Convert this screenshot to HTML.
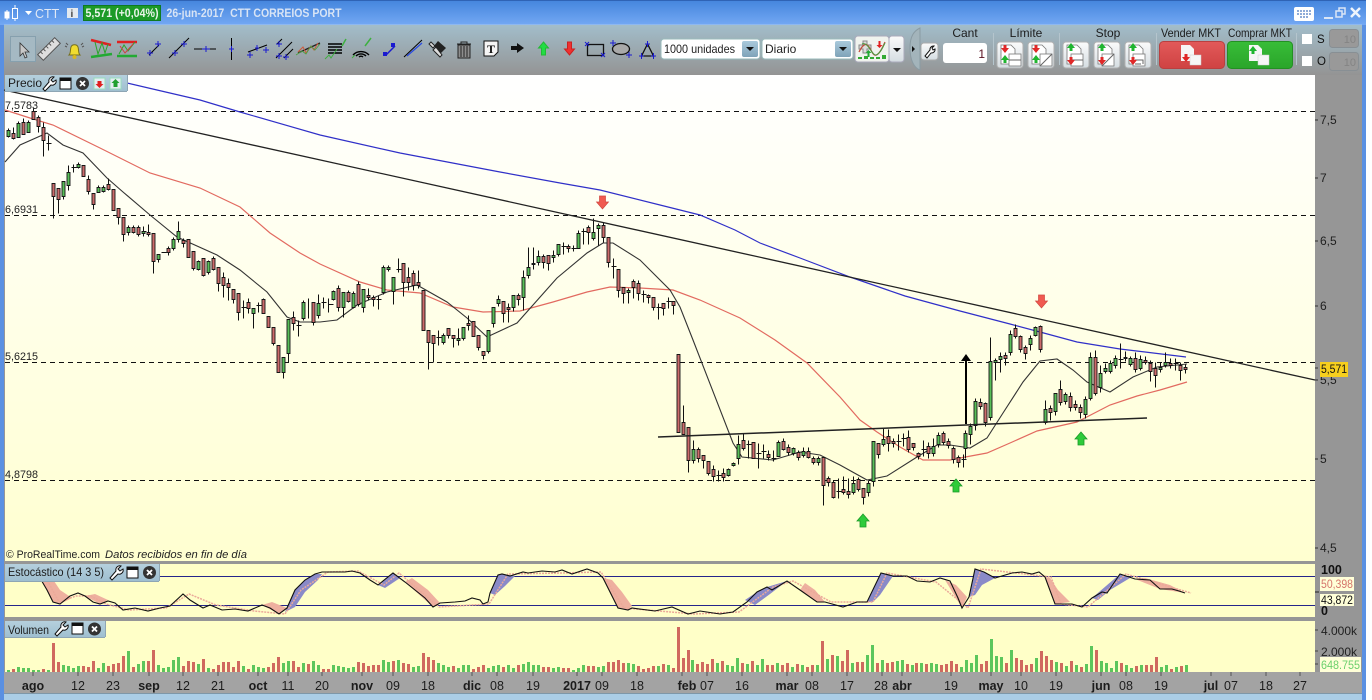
<!DOCTYPE html>
<html><head><meta charset="utf-8"><title>CTT</title>
<style>html,body{margin:0;padding:0;background:#fff;overflow:hidden}svg{display:block}text{font-family:"Liberation Sans",sans-serif}</style></head>
<body>
<svg xmlns="http://www.w3.org/2000/svg" width="1372" height="700" viewBox="0 0 1372 700">
<defs>
<linearGradient id="tb" x1="0" y1="0" x2="0" y2="1"><stop offset="0" stop-color="#4485dd"/><stop offset="1" stop-color="#73a8f3"/></linearGradient>
<linearGradient id="tl" x1="0" y1="0" x2="0" y2="1"><stop offset="0" stop-color="#a2bdca"/><stop offset="1" stop-color="#949494"/></linearGradient>
<linearGradient id="ch" x1="0" y1="0" x2="0" y2="1"><stop offset="0" stop-color="#ffffff"/><stop offset="1" stop-color="#ffffd0"/></linearGradient>
<linearGradient id="hd" x1="0" y1="0" x2="0" y2="1"><stop offset="0" stop-color="#b5d0dd"/><stop offset="1" stop-color="#9fbfd0"/></linearGradient>
<linearGradient id="bt" x1="0" y1="0" x2="0" y2="1"><stop offset="0" stop-color="#fbfbfb"/><stop offset="1" stop-color="#d5dde2"/></linearGradient>
<linearGradient id="rd" x1="0" y1="0" x2="0" y2="1"><stop offset="0" stop-color="#e25a5a"/><stop offset="1" stop-color="#cf4242"/></linearGradient>
<linearGradient id="gn" x1="0" y1="0" x2="0" y2="1"><stop offset="0" stop-color="#38bd38"/><stop offset="1" stop-color="#2aa52a"/></linearGradient>
<linearGradient id="dd" x1="0" y1="0" x2="0" y2="1"><stop offset="0" stop-color="#a9c9dc"/><stop offset="1" stop-color="#7fa3b8"/></linearGradient>
</defs>

<rect width="1366" height="700" fill="#5a90e2"/>
<rect width="1366" height="25" fill="url(#tb)"/>
<rect y="0" width="1366" height="1" fill="#2f63b5"/>
<rect x="4" y="24.500" width="1358" height="1" fill="#a8c8ee"/>
<rect x="4" y="25" width="1358" height="50" fill="url(#tl)"/>
<rect x="4" y="75" width="1358" height="619" fill="#969696"/>
<rect x="5" y="75" width="1310" height="486" fill="url(#ch)"/>
<rect x="5" y="564" width="1310" height="53" fill="#ffffc8"/>
<rect x="5" y="621" width="1310" height="51" fill="#ffffc8"/>
<rect x="4" y="672" width="1358" height="21" fill="#a3a3a3"/>
<rect x="4" y="693" width="1358" height="1" fill="#7e97a8"/>
<rect x="4" y="694" width="1358" height="6" fill="#aacde6"/>

<!-- title bar -->
<g fill="#fff" stroke="#fff"><rect x="5" y="12" width="4" height="6"/><path d="M7 10v10" fill="none"/><rect x="12.500" y="8.500" width="5" height="10" fill="none"/><path d="M15 5v3M15 19v2" fill="none"/></g>
<path d="M25 11h7l-3.500 4z" fill="#fff"/>
<text x="35" y="18" font-size="12.500" fill="#e0e8f5">CTT</text>
<rect x="67" y="8" width="11" height="10" fill="#e3e9ef"/><text x="70.500" y="17" font-size="10" font-weight="bold" fill="#444">i</text>
<rect x="83.500" y="5.500" width="77" height="15" fill="#1c9a28" stroke="#0e7a22"/>
<text x="85.500" y="17" font-size="12" font-weight="bold" fill="#eaf5ea" textLength="73" lengthAdjust="spacingAndGlyphs">5,571 (+0,04%)</text>
<text x="166.500" y="17" font-size="11.500" font-weight="bold" fill="#d8e4f5" textLength="175" lengthAdjust="spacingAndGlyphs" xml:space="preserve">26-jun-2017  CTT CORREIOS PORT</text>
<rect x="1294" y="7" width="20" height="14" rx="2" fill="#fff"/><path d="M1297 11h14M1297 14h14M1300 17h8" stroke="#6a90cc" stroke-width="1.500" stroke-dasharray="2 1"/>
<path d="M1324 18h9" stroke="#dbe6f6" stroke-width="2"/>
<path d="M1336 11h6v6h-6zM1339 11v-3h6v6h-3" fill="none" stroke="#dbe6f6" stroke-width="1.500"/>
<path d="M1351 8l9 9M1360 8l-9 9" stroke="#eef4fc" stroke-width="2.500"/>

<!-- toolbar left -->
<rect x="10.500" y="36.500" width="25" height="25" fill="#a5b9c3" stroke="#86a0ae"/>
<path d="M20 43v13l3-3 2 5 2-1-2-5h4z" fill="#c8c8c8" stroke="#333" stroke-width=".8"/>
<g transform="translate(49 49) rotate(-45)"><rect x="-12" y="-4" width="24" height="8" fill="#dedede" stroke="#555"/><path d="M-8-4v3M-4-4v3M0-4v3M4-4v3M8-4v3" stroke="#555"/></g>
<path d="M69 55c2-2 1-5 2-8 1-3 6-3 7 0 1 3 0 6 2 8z" fill="#f0dc30" stroke="#77701c"/><circle cx="74.500" cy="57" r="2" fill="#d8b820"/><path d="M65 46l2 1M66 43l2 2M84 46l-2 1M83 43l-2 2" stroke="#555"/>
<path d="M91 40l20 5" stroke-width="2.500" fill="none" stroke="#e02020"/><path d="M91 57l21-3" stroke="#22aa33" stroke-width="2.500"/><path d="M95 42l3 12 4-11 3 10 3-9" fill="none" stroke="#2aa52a"/>
<path d="M117 42h20" stroke="#e02020" stroke-width="2.500"/><path d="M117 56h20" stroke="#22aa33" stroke-width="2.500"/><path d="M119 54l5-9 4 6 7-9" fill="none" stroke="#2aa52a"/><path d="M120 46l5 7 8-9" fill="none" stroke="#d04040"/>
<g fill="none" stroke="#000"><path d="M149 55l10-10"/><path d="M169 58l20-20"/><path d="M194 49h22"/><path d="M231.500 38v22"/><path d="M248 52l19-7"/><path d="M276 58l16-16M284 58l9-9M277 44l5-5"/><path d="M298 53l22-10" stroke="#222" stroke-width="1.300"/><path d="M328 44h14M328 47h14M328 50h14M328 53h14" stroke-width="1.500"/><path d="M353 55a11 11 0 0 1 16 0M356 56a7 7 0 0 1 10 0M359 57a3 3 0 0 1 4 0" stroke-width="1.400"/><path d="M404 57l18-17"/></g>
<g stroke="#1a1ad0" fill="none"><path d="M147 53h6M150 50v6M155 44h6M158 41v6M172 53h6M175 50v6M181 44h6M184 41v6M202 49h8M206 46v6M229 49h5M231.500 46v6M247 55h6M250 52v6M263 50h6M266 47v6M255 48h4M257 45v6M276 56h6M279 53v6M283 57h6M286 54v6M276 44h6M279 41v6"/><path d="M407 56l15-13" stroke="#2a4ae0" stroke-width="1.300"/><path d="M386 55l9-9" stroke-width="1.500"/></g>
<rect x="383" y="52" width="4" height="4" fill="#1a1ad0"/><rect x="391" y="43" width="4" height="4" fill="#1a1ad0"/>
<path d="M298 52l5-5 3 6 5-7 3 4 4-7" fill="none" stroke="#cc5a3a"/><path d="M296 55l6-4 4 3 5-8 4 4 5-6" fill="none" stroke="#4aa040" stroke-width=".8"/>
<path d="M325 59l4-4 2 3 6-9M352 58l3-3" fill="none" stroke="#3eb040"/><path d="M342 46l4-7M365 46l6-8" stroke="#3eb040" fill="none" stroke-width="1.500"/>
<path d="M431 42l4 4-2 2-4-4zM436 47l6 8-2 2-7-7z" fill="#ddd" stroke="#222"/><path d="M438 41l8 7-5 5-7-7z" fill="#222"/>
<rect x="458" y="45" width="12" height="13" fill="#8e8e8e" stroke="#222"/><path d="M457 44h14M461 46v11M464 46v11M467 46v11M461 44v-2h6v2" fill="none" stroke="#222"/>
<path d="M484 41h14v11l-4 4h-10z" fill="#f5f5f5" stroke="#111"/><text x="487" y="53" font-size="12" font-weight="bold" fill="#111" style="font-family:'Liberation Serif',serif">T</text>
<path d="M511 46h6v-3l7 5-7 5v-3h-6z" fill="#111"/>
<path d="M543.500 42l5 6h-3v7h-4v-7h-3z" fill="#22dd44" stroke="#22bb33"/>
<path d="M569.500 55l5-6h-3v-7h-4v7h-3z" fill="#f03030" stroke="#cc2020"/>
<rect x="587.500" y="44.500" width="16" height="11" fill="none" stroke="#111" stroke-width="1.300"/><path d="M585 42l4 4M589 42l-4 4M601 53l4 4M605 53l-4 4" stroke="#1a1ad0"/>
<ellipse cx="621" cy="49" rx="8.500" ry="5.500" fill="#a9a9a9" stroke="#111" stroke-width="1.300"/><path d="M610 43h6M613 40v6M626 55h6M629 52v6" stroke="#1a1ad0"/>
<path d="M647.500 44l-6 12h12z" fill="none" stroke="#111" stroke-width="1.300"/><path d="M645 44h5M647.500 41v6M639 56h5M641.500 53v6M651 56h5M653.500 53v6" stroke="#1a1ad0"/>

<rect x="661" y="39" width="99" height="20" rx="3" fill="#fff" stroke="#9bb"/><text x="664" y="53" font-size="12" fill="#222" textLength="71" lengthAdjust="spacingAndGlyphs">1000 unidades</text>
<rect x="742" y="41" width="16" height="16" rx="2" fill="url(#dd)"/><path d="M746 47h8l-4 4z" fill="#111"/>
<rect x="762" y="39" width="91" height="20" rx="3" fill="#fff" stroke="#9bb"/><text x="765" y="53" font-size="12" fill="#222">Diario</text>
<rect x="835" y="41" width="16" height="16" rx="2" fill="url(#dd)"/><path d="M839 47h8l-4 4z" fill="#111"/>
<rect x="855" y="36" width="34" height="26" rx="3" fill="#f0f3ee" stroke="#aab"/><rect x="889" y="36" width="15" height="26" rx="3" fill="url(#bt)" stroke="#aab"/><path d="M893 48h8l-4 4z" fill="#111"/>
<path d="M859 45h4v-4h4v4h4v4h-4v4h-4v-4h-4z" fill="#ddd" stroke="#888"/><path d="M859 52c6-12 9-8 13 0 3 6 7 4 13-10" fill="none" stroke="#c05040" stroke-width="1.300"/><path d="M862 44c6-3 10 12 14 11s7-8 9-12" fill="none" stroke="#4a9a40"/><path d="M868.500 50l3 3h-2v4h-2v-4h-2z" fill="#22aa33"/><path d="M879.500 48l3-3h-2v-4h-2v4h-2z" fill="#e02020"/><path d="M858 59v-2h4v2zM864 59v-3h4v3zM870 59v-2h4v2zM876 59v-2h4v2zM882 59v-4h4v4z" fill="#33aa33"/>
<path d="M920 28c-6 3-10 8-10 20 0 12 4 20 10 22z" fill="#a3b4bb" stroke="#8a9ba3"/><path d="M912 46v6l3-3z" fill="#111"/>

<!-- toolbar right -->
<rect x="921" y="43" width="17" height="17" rx="3" fill="url(#bt)" stroke="#aaa"/><path d="M925 56l5-6a3.500 3.500 0 0 1 4-4l-2 2 1 2 2-1a3.500 3.500 0 0 1-4 4l-4 5z" fill="#fff" stroke="#111"/>
<rect x="943" y="43" width="44" height="20" rx="3" fill="#fff"/><text x="985" y="58" font-size="12" fill="#5a1020" text-anchor="end">1</text>
<text x="965" y="37" font-size="12" fill="#1c1c1c" text-anchor="middle">Cant</text>
<text x="1026" y="37" font-size="12" fill="#1c1c1c" text-anchor="middle">Límite</text>
<text x="1108" y="37" font-size="12" fill="#1c1c1c" text-anchor="middle">Stop</text>
<text x="1191" y="37" font-size="12" fill="#1c1c1c" text-anchor="middle" textLength="60" lengthAdjust="spacingAndGlyphs">Vender MKT</text>
<text x="1260" y="37" font-size="12" fill="#1c1c1c" text-anchor="middle" textLength="64" lengthAdjust="spacingAndGlyphs">Comprar MKT</text>
<path d="M993.500 33v32M1059.500 33v32M1156.500 33v32M1296.500 33v32" stroke="#b5c5cd"/>
<g fill="url(#bt)" stroke="#b0b0b0"><rect x="997" y="42" width="26" height="26" rx="3"/><rect x="1028" y="42" width="26" height="26" rx="3"/><rect x="1063" y="42" width="26" height="26" rx="3"/><rect x="1094" y="42" width="26" height="26" rx="3"/><rect x="1125" y="42" width="26" height="26" rx="3"/></g>
<g fill="#fff" stroke="#777" stroke-width=".8"><path d="M1001 45h10l4 4v15h-14zM1032 45h10l4 4v15h-14zM1067 45h10l4 4v15h-14zM1098 45h10l4 4v15h-14zM1129 45h10l4 4v15h-14z"/><rect x="1009" y="54" width="12" height="12"/><rect x="1040" y="54" width="12" height="12"/><rect x="1071" y="54" width="12" height="12"/><rect x="1102" y="54" width="12" height="12"/><rect x="1133" y="54" width="12" height="12"/></g>
<path d="M1009 60h12M1071 60h12M1040 66l12-12M1102 66l12-12M1135 60h8v4M1135 64h6" stroke="#666" fill="none"/>
<g fill="#e02828"><path d="M1005 53l-4-5h2.500v-3h3v3h2.500zM1036 53l-4-5h2.500v-3h3v3h2.500zM1071 65l-4-5h2.500v-3h3v3h2.500zM1102 65l-4-5h2.500v-3h3v3h2.500zM1133 65l-4-5h2.500v-3h3v3h2.500z"/></g>
<g fill="#1fb52f"><path d="M1005 55l-4 5h2.500v3h3v-3h2.500zM1036 55l-4 5h2.500v3h3v-3h2.500zM1071 43l-4 5h2.500v3h3v-3h2.500zM1102 43l-4 5h2.500v3h3v-3h2.500zM1133 43l-4 5h2.500v3h3v-3h2.500z"/></g>
<rect x="1159.500" y="41.500" width="65" height="27" rx="4" fill="url(#rd)" stroke="#b94040"/>
<rect x="1227.500" y="41.500" width="65" height="27" rx="4" fill="url(#gn)" stroke="#239023"/>
<path d="M1181 45h9l4 4v12h-13zM1249 45h9l4 4v12h-13z" fill="#f6f6f6"/><rect x="1190" y="55" width="11" height="10" fill="#f6f6f6" stroke="#ccc" stroke-width=".5"/><rect x="1258" y="55" width="11" height="10" fill="#f6f6f6" stroke="#ccc" stroke-width=".5"/>
<path d="M1186 62l-4-5h2.500v-3h3v3h2.500z" fill="#e02828"/><path d="M1253 46l-4 5h2.500v3h3v-3h2.500z" fill="#1fb52f"/>
<rect x="1302" y="34" width="10" height="10" fill="#fff"/><rect x="1302" y="56" width="10" height="10" fill="#fff"/>
<text x="1317" y="43" font-size="11.500" fill="#111">S</text><text x="1317" y="65" font-size="11.500" fill="#111">O</text>
<rect x="1329.500" y="29.500" width="29" height="18" rx="3" fill="#999" stroke="#888f94"/><rect x="1329.500" y="52.500" width="29" height="18" rx="3" fill="#999" stroke="#888f94"/>
<text x="1356" y="43" font-size="11" fill="#848484" text-anchor="end">10</text><text x="1356" y="66" font-size="11" fill="#848484" text-anchor="end">10</text>

<!-- price chart -->
<path d="M5 111.500H1315M5 215.500H1315M5 362.500H1315M5 480.500H1315" stroke="#111" stroke-dasharray="5 4" fill="none"/>
<path d="M127 83L157 90 200 100 240 112 320 135 400 153 500 172 560 183 600 190 660 205 700 215 735 230 760 243 800 258 850 277 905 296 960 311 1010 324 1040 332 1077 342 1120 349 1186 357" fill="none" stroke="#3030c8" stroke-width="1.200"/>
<path d="M5 110L30 118 53 125 100 148 150 173 200 188 240 207 270 233 300 253 320 264 360 282 387 290 420 293 453 307 483 312 520 311 553 302 587 292 610 287 640 288 673 290 700 300 740 318 775 340 807 363 840 397 860 420 877 432 900 447 923 460 950 460 960 458 987 453 1010 443 1037 431 1077 422 1110 405 1137 396 1160 390 1187 382" fill="none" stroke="#e26a60" stroke-width="1.200"/>
<path d="M5 162L20 145 47 133 63 145 83 153 107 178 123 192 150 215 177 237 217 255 240 270 267 292 287 317 300 322 320 322 337 320 357 305 387 292 417 285 447 302 467 318 487 337 517 323 557 278 587 253 603 243 613 243 640 260 670 290 680 307 693 340 733 443 742 457 773 460 800 452 820 455 840 465 867 480 887 476 917 457 937 445 950 445 970 448 987 438 1003 413 1023 382 1040 361 1057 359 1073 370 1087 382 1110 392 1133 377 1157 367 1187 364" fill="none" stroke="#333" stroke-width="1.100"/>

<!-- wicks -->
<path transform="translate(.5 .5)" fill="none" stroke="#111" d="M8 128V137M13 127V139M18 121V137M23 118V134M28 120V132M33 108V119M38 115V132M43 122V156M46 143H51M48 135V150M53 183V218M58 188V213M63 181V199M68 165V190M71 167H76M73 164V172M78 162V168M83 165V176M88 175V194M93 193V209M98 185V192M103 185V192M108 178V190M113 189V210M118 208V224M123 217V241M128 225V235M133 225V233M138 225V236M141 231H146M143 226V236M148 224V236M153 233V273M158 254V262M161 252H166M168 246V255M173 237V250M178 221V242M183 238V247M188 239V257M193 251V270M198 260V270M203 258V276M208 260V274M213 256V270M218 267V291M223 272V297M228 278V300M233 289V303M238 293V320M241 307H246M243 300V318M248 298V313M253 308V328M256 305H261M258 302V312M263 298V313M268 316V327M273 327V345M278 345V372M283 357V378M288 319V362M293 311V330M296 325H301M298 320V336M303 300V320M308 298V318M313 302V325M318 294V318M321 302H326M323 297V308M328 304H333M328 298V312M333 290V300M338 285V311M343 292V317M348 290V302M353 291V308M358 281V306M363 289V312M368 288V300M373 295V306M376 299H381M378 295V309M383 265V294M388 265V271M393 277V304M396 269H401M398 258V272M403 263V296M408 267V290M413 270V290M418 270V288M423 290V330M428 330V369M433 335V362M436 337H441M438 330V345M443 333V344M448 328V338M453 335V347M458 328V345M463 327V340M468 315V330M473 321V336M478 335V350M483 351V359M488 338V353M493 307V327M498 295V306M503 301V322M508 303V322M513 295V311M518 293V305M523 270V310M528 247V278M533 247V269M538 250V265M543 254V268M548 255V270M553 250V262M558 244V256M561 246H566M563 242V254M568 244V252M571 248H576M573 245V251M578 230V248M581 231H586M583 228V244M588 225V244M593 218V240M598 223V245M603 222V242M608 237V267M611 266H616M613 258V278M618 269V297M623 287V303M628 288V303M633 279V298M638 280V300M641 294H646M643 290V302M648 294V303M653 297V310M656 307H661M658 303V319M663 303V315M666 301H671M668 297V308M673 301V314M678 354V432M683 405V434M688 427V472M693 440V463M698 447V462M703 455V468M708 461V475M713 465V481M716 475H721M718 470V481M723 468V481M728 468V476M733 462V466M738 435V464M743 433V450M746 444H751M748 440V458M753 442V458M756 453H761M758 443V468M761 451H766M763 444V458M768 450V460M771 458H776M773 450V461M778 440V456M783 438V450M788 444V455M793 447V455M798 450V460M803 447V457M808 447V458M813 456V464M818 456V465M823 457V505M828 476V486M833 480V498M836 491H841M838 478V498M843 476V494M848 478V498M853 476V494M858 477V491M863 488V504M868 480V496M873 441V486M878 443V458M883 428V446M888 429V451M893 438V447M896 441H901M898 434V450M901 438H906M903 433V446M908 430V452M913 443V450M918 452V459M921 449H926M923 440V456M928 442V458M933 438V456M938 432V447M943 431V444M948 438V448M953 446V463M958 455V467M961 459H966M963 454V467M965 430V458M970 423V444M975 398V430M980 398V409M985 402V426M990 337V420M995 358V380M1000 352V372M1005 352V365M1010 330V355M1015 324V338M1020 335V352M1025 345V359M1030 335V350M1035 326V336M1040 325V352M1045 400V424M1050 405V420M1055 393V415M1060 380V405M1065 392V404M1070 392V411M1075 400V410M1080 404V418M1085 396V418M1090 352V400M1095 350V395M1100 365V392M1105 363V373M1110 360V373M1115 355V368M1118 359H1123M1120 343V368M1125 351V361M1130 356V366M1135 352V372M1140 355V370M1145 356V364M1150 360V381M1155 362V387M1160 362V372M1165 352V367M1170 358V368M1173 363H1178M1175 358V370M1180 362V380M1185 364V373"/>
<!-- green bodies -->
<path transform="translate(0 .5)" fill="#58bf58" stroke="#161616" stroke-width=".9" d="M7 130h3V136h-3zM17 123h3V137h-3zM27 122h3V132h-3zM62 181h3V196h-3zM67 172h3V185h-3zM77 164h3V167h-3zM97 187h3V192h-3zM102 187h3V191h-3zM127 227h3V232h-3zM142 231h3V233h-3zM157 254h3V259h-3zM172 239h3V248h-3zM177 231h3V239h-3zM197 261h3V269h-3zM207 261h3V272h-3zM252 308h3V313h-3zM282 357h3V372h-3zM287 319h3V353h-3zM302 302h3V318h-3zM317 303h3V315h-3zM332 291h3V299h-3zM342 292h3V307h-3zM352 293h3V307h-3zM362 289h3V307h-3zM382 267h3V292h-3zM387 267h3V269h-3zM392 277h3V291h-3zM442 335h3V342h-3zM457 338h3V340h-3zM462 327h3V338h-3zM487 330h3V351h-3zM492 307h3V323h-3zM497 299h3V303h-3zM512 295h3V307h-3zM522 277h3V297h-3zM527 267h3V275h-3zM532 263h3V264h-3zM537 256h3V262h-3zM552 255h3V257h-3zM557 244h3V254h-3zM577 233h3V248h-3zM592 232h3V238h-3zM597 225h3V228h-3zM627 290h3V292h-3zM692 449h3V460h-3zM727 469h3V475h-3zM732 463h3V465h-3zM737 444h3V458h-3zM777 442h3V456h-3zM792 448h3V453h-3zM802 451h3V455h-3zM817 458h3V462h-3zM852 483h3V492h-3zM867 483h3V492h-3zM872 441h3V481h-3zM882 439h3V444h-3zM932 446h3V453h-3zM937 435h3V444h-3zM964 433h3V448h-3zM969 426h3V434h-3zM974 401h3V425h-3zM989 361h3V417h-3zM994 360h3V362h-3zM999 356h3V359h-3zM1009 334h3V352h-3zM1029 338h3V344h-3zM1034 327h3V335h-3zM1044 409h3V422h-3zM1054 393h3V411h-3zM1064 394h3V401h-3zM1084 399h3V414h-3zM1089 357h3V398h-3zM1099 373h3V387h-3zM1104 368h3V371h-3zM1109 363h3V371h-3zM1114 358h3V365h-3zM1129 358h3V364h-3zM1139 359h3V368h-3zM1159 367h3V369h-3zM1164 362h3V365h-3z"/>
<!-- red bodies -->
<path transform="translate(0 .5)" fill="#cc6b6b" stroke="#161616" stroke-width=".9" d="M12 133h3V138h-3zM22 122h3V134h-3zM32 111h3V119h-3zM37 117h3V126h-3zM42 127h3V140h-3zM52 183h3V196h-3zM57 188h3V199h-3zM82 165h3V176h-3zM87 179h3V191h-3zM92 193h3V204h-3zM107 184h3V189h-3zM112 189h3V210h-3zM117 208h3V217h-3zM122 217h3V234h-3zM132 227h3V232h-3zM137 227h3V234h-3zM147 232h3V234h-3zM152 233h3V261h-3zM167 248h3V252h-3zM182 240h3V243h-3zM187 239h3V257h-3zM192 251h3V268h-3zM202 258h3V275h-3zM212 258h3V269h-3zM217 267h3V283h-3zM222 277h3V285h-3zM227 283h3V287h-3zM232 289h3V299h-3zM237 293h3V312h-3zM247 302h3V308h-3zM262 299h3V313h-3zM267 316h3V327h-3zM272 327h3V343h-3zM277 345h3V372h-3zM292 317h3V323h-3zM312 302h3V322h-3zM337 288h3V307h-3zM347 292h3V301h-3zM357 284h3V304h-3zM367 295h3V297h-3zM372 297h3V299h-3zM402 263h3V282h-3zM407 277h3V282h-3zM412 273h3V285h-3zM417 282h3V285h-3zM422 290h3V330h-3zM427 330h3V342h-3zM432 335h3V343h-3zM447 328h3V335h-3zM452 335h3V338h-3zM467 323h3V325h-3zM472 321h3V336h-3zM477 335h3V347h-3zM482 351h3V355h-3zM502 301h3V313h-3zM507 307h3V309h-3zM517 295h3V299h-3zM542 256h3V262h-3zM547 255h3V263h-3zM567 246h3V248h-3zM587 227h3V232h-3zM602 225h3V237h-3zM607 237h3V262h-3zM617 269h3V290h-3zM622 287h3V293h-3zM632 281h3V287h-3zM637 283h3V293h-3zM647 295h3V297h-3zM652 297h3V307h-3zM662 303h3V308h-3zM672 301h3V305h-3zM677 354h3V432h-3zM682 422h3V434h-3zM687 427h3V460h-3zM697 449h3V458h-3zM702 455h3V460h-3zM707 461h3V473h-3zM712 469h3V476h-3zM722 473h3V477h-3zM742 440h3V448h-3zM752 442h3V458h-3zM767 454h3V457h-3zM782 441h3V449h-3zM787 447h3V452h-3zM797 452h3V457h-3zM807 451h3V457h-3zM812 458h3V462h-3zM822 457h3V485h-3zM827 478h3V482h-3zM832 482h3V497h-3zM842 489h3V492h-3zM847 491h3V494h-3zM857 479h3V489h-3zM862 488h3V497h-3zM877 443h3V454h-3zM887 436h3V443h-3zM892 441h3V443h-3zM907 437h3V449h-3zM912 443h3V447h-3zM917 453h3V456h-3zM927 446h3V453h-3zM942 433h3V442h-3zM947 441h3V445h-3zM952 448h3V459h-3zM957 457h3V462h-3zM979 402h3V406h-3zM984 403h3V422h-3zM1004 355h3V358h-3zM1014 328h3V336h-3zM1019 336h3V349h-3zM1024 347h3V353h-3zM1039 326h3V349h-3zM1049 408h3V412h-3zM1059 389h3V402h-3zM1069 396h3V407h-3zM1074 404h3V407h-3zM1079 407h3V412h-3zM1094 357h3V393h-3zM1124 357h3V358h-3zM1134 358h3V369h-3zM1144 360h3V362h-3zM1149 363h3V371h-3zM1154 368h3V375h-3zM1169 363h3V365h-3zM1179 365h3V370h-3zM1184 367h3V369h-3z"/>

<path d="M4 90L1315 380" stroke="#222" stroke-width="1.300" fill="none"/>
<path d="M658 437L1147 418" stroke="#222" stroke-width="1.500" fill="none"/>
<path d="M966 424V360" stroke="#000" stroke-width="2"/><path d="M961 361l5-7 5 7z" fill="#000"/>
<path d="M599.500 196h6v6h3l-6 7-6-7h3z" fill="#f05a50" stroke="#d04840" stroke-width=".7"/>
<path d="M1038.500 295h6v6h3l-6 7-6-7h3z" fill="#f05a50" stroke="#d04840" stroke-width=".7"/>
<path d="M860 527v-6h-3l6-7 6 7h-3v6z" fill="#2ecb3a" stroke="#1b9a28" stroke-width=".8"/>
<path d="M953 492v-6h-3l6-7 6 7h-3v6z" fill="#2ecb3a" stroke="#1b9a28" stroke-width=".8"/>
<path d="M1078 445v-6h-3l6-7 6 7h-3v6z" fill="#2ecb3a" stroke="#1b9a28" stroke-width=".8"/>

<text x="5" y="109" font-size="11" fill="#222" textLength="33" lengthAdjust="spacingAndGlyphs">7,5783</text>
<text x="5" y="213" font-size="11" fill="#222" textLength="33" lengthAdjust="spacingAndGlyphs">6,6931</text>
<text x="5" y="360" font-size="11" fill="#222" textLength="33" lengthAdjust="spacingAndGlyphs">5,6215</text>
<text x="5" y="478" font-size="11" fill="#222" textLength="33" lengthAdjust="spacingAndGlyphs">4,8798</text>
<text x="6" y="558" font-size="11" fill="#222" textLength="94" lengthAdjust="spacingAndGlyphs">© ProRealTime.com</text>
<text x="105" y="558" font-size="11" font-style="italic" fill="#222" textLength="142" lengthAdjust="spacingAndGlyphs">Datos recibidos en fin de día</text>

<!-- right axis -->
<g font-size="12" fill="#1f1f1f"><text x="1320" y="124">7,5</text><text x="1320" y="182">7</text><text x="1320" y="245">6,5</text><text x="1320" y="310">6</text><text x="1320" y="384">5,5</text><text x="1320" y="463">5</text><text x="1320" y="552">4,5</text></g>
<path d="M1315 120h3M1315 178h3M1315 241h3M1315 306h3M1315 380h3M1315 459h3M1315 548h3M1315 368h3" stroke="#333"/>
<rect x="1320" y="362" width="28" height="15" fill="#f7cf1e"/><text x="1321" y="373" font-size="12" fill="#111" textLength="26" lengthAdjust="spacingAndGlyphs">5,571</text>

<!-- panel header price -->
<rect x="5" y="75" width="122" height="16" fill="url(#hd)"/><path d="M127.500 75v16M5 91.500h122" stroke="#8ea6b4"/>
<text x="8" y="87" font-size="12" fill="#1c1c1c">Precio</text>
<path d="M43 89l6-7a4 4 0 0 1 5-5l-3 3 2 2 3-2a4 4 0 0 1-5 5l-6 6z" fill="#fff" stroke="#111"/>
<rect x="60" y="78" width="11" height="11" fill="#fff" stroke="#111"/><rect x="60" y="78" width="11" height="3" fill="#111"/>
<circle cx="82.500" cy="83.500" r="6.500" fill="#333"/><path d="M80 81l5 5M85 81l-5 5" stroke="#fff" stroke-width="1.800"/>
<rect x="94" y="78" width="11" height="11" fill="#e5eef3" stroke="#9db"/><path d="M99.500 88l-4-4h2v-3h4v3h2z" fill="#e02020"/>
<rect x="110" y="78" width="11" height="11" fill="#e5eef3" stroke="#9db"/><path d="M115.500 79l-4 4h2v4h4v-4h2z" fill="#20a030"/>

<!-- stochastic -->
<path d="M5 576.500H1315M5 605.500H1315" stroke="#25258a" fill="none"/>
<g fill="#8a8ac8"><path d="M285 612L295 590 305 580 315 574 322 574 318 580 305 592 295 607z"/><path d="M490 593L498 575 502 574 515 576 505 586 495 595z"/><path d="M745 600L757 592 767 587 787 581 770 594 755 605z"/><path d="M867 602L881 573 893 576 880 595 873 602z"/><path d="M969 597L975 569 984 572 995 578 982 585 975 595z"/><path d="M1092 598L1120 574 1130 578 1110 590 1098 600z"/><path d="M378 585L393 573 400 578 385 588z"/></g>
<g fill="#eeb09f"><path d="M40 578L53 602 60 604 72 598 60 590 50 575z"/><path d="M405 582L433 607 440 603 428 590 412 578z"/><path d="M603 578L618 608 628 610 632 606 622 592 612 580z"/><path d="M800 590L817 602 825 602 815 590 805 583z"/><path d="M945 580L962 608 967 597 956 585z"/><path d="M1045 577L1055 604 1070 602 1058 590 1050 578z"/><path d="M1135 579L1160 589 1185 593 1170 585 1145 578z"/><path d="M85 596L100 604 108 600 95 594z"/><path d="M262 605L279 614 287 608 272 602z"/></g>
<path transform="translate(6 0)" fill="none" stroke="#eba99a" stroke-width="1.500" stroke-dasharray="2 1" d="M40 578L53 602 70 596 85 596 100 604 123 610 160 608 183 594 210 605 248 611 279 614 295 590 322 572 352 571 378 585 393 573 433 607 483 604 502 574 555 573 595 572 618 608 688 614 733 612 767 587 787 581 825 602 867 602 881 573 930 582 962 608 975 569 1045 577 1055 604 1082 607 1120 574 1185 593"/>
<path fill="none" stroke="#111" stroke-width="1.100" d="M40 578L47 590 53 602 60 604 70 596 78 593 85 596 93 602 100 604 108 601 115 603 123 610 135 608 148 611 160 608 170 606 183 594 190 600 203 608 210 605 222 610 235 609 248 611 262 605 270 608 279 614 287 608 295 590 305 580 315 574 322 572 345 572 352 571 360 573 370 580 378 585 393 573 405 582 415 590 425 598 433 607 440 603 455 602 465 601 472 598 480 600 483 604 488 602 490 593 498 575 502 574 510 576 523 572 528 573 542 571 555 572 562 570 572 574 587 569 598 573 603 578 618 608 628 610 632 608 655 611 672 607 688 614 700 611 720 614 733 612 747 602 757 592 767 587 772 590 787 581 800 590 817 602 825 602 843 607 857 602 867 602 881 573 893 576 907 576 917 581 930 582 940 578 950 581 958 598 962 608 969 597 975 569 984 572 995 578 1012 573 1022 572 1032 574 1039 572 1045 577 1055 604 1072 604 1082 607 1092 598 1102 592 1107 593 1120 574 1135 579 1150 580 1160 589 1172 589 1179 591 1185 593"/>
<rect x="5" y="564" width="154" height="17" fill="url(#hd)"/><path d="M159.500 564v17M5 581.500h154" stroke="#8ea6b4"/>
<text x="8" y="576" font-size="12" fill="#1c1c1c" textLength="96" lengthAdjust="spacingAndGlyphs">Estocástico (14 3 5)</text>
<path d="M110 578l6-7a4 4 0 0 1 5-5l-3 3 2 2 3-2a4 4 0 0 1-5 5l-6 6z" fill="#fff" stroke="#111"/>
<rect x="127" y="567" width="11" height="11" fill="#fff" stroke="#111"/><rect x="127" y="567" width="11" height="3" fill="#111"/>
<circle cx="149.500" cy="572.500" r="6.500" fill="#333"/><path d="M147 570l5 5M152 570l-5 5" stroke="#fff" stroke-width="1.800"/>
<text x="1321" y="574" font-size="12.500" font-weight="bold" fill="#111">100</text>
<text x="1321" y="615" font-size="12.500" font-weight="bold" fill="#111">0</text>
<rect x="1320" y="577" width="34" height="14" fill="#ffffd8"/><text x="1321" y="588" font-size="12" fill="#d5756a" textLength="32" lengthAdjust="spacingAndGlyphs">50,398</text>
<rect x="1320" y="594" width="34" height="12" fill="#ffffd8"/><text x="1321" y="604" font-size="12" fill="#111" textLength="32" lengthAdjust="spacingAndGlyphs">43,872</text>
<path d="M1315 592h4" stroke="#222"/>

<!-- volume -->
<path transform="translate(.5 0)" fill="none" stroke="#5cc65c" stroke-width="3" d="M8 672v-2M18 672v-5M23 672v-4M28 672v-4M33 672v-2M38 672v-2M48 672v-2M63 672v-7M68 672v-6M73 672v-4M78 672v-6M98 672v-4M103 672v-9M128 672v-21M138 672v-8M143 672v-11M158 672v-7M163 672v-4M168 672v-5M173 672v-12M178 672v-15M198 672v-8M208 672v-4M243 672v-6M253 672v-7M258 672v-5M263 672v-4M283 672v-9M288 672v-11M303 672v-9M313 672v-11M318 672v-7M333 672v-7M338 672v-6M343 672v-5M348 672v-4M353 672v-5M383 672v-12M388 672v-10M398 672v-12M413 672v-5M418 672v-6M438 672v-9M443 672v-7M448 672v-5M458 672v-4M463 672v-7M468 672v-7M488 672v-4M493 672v-6M498 672v-7M508 672v-7M513 672v-4M523 672v-8M528 672v-10M533 672v-7M538 672v-7M553 672v-4M558 672v-5M573 672v-2M578 672v-4M583 672v-7M598 672v-5M603 672v-6M628 672v-9M633 672v-8M658 672v-6M668 672v-7M692 672v-12M717 672v-9M727 672v-7M732 672v-6M737 672v-14M747 672v-8M757 672v-7M762 672v-13M777 672v-9M792 672v-5M802 672v-7M817 672v-7M827 672v-13M837 672v-16M852 672v-9M867 672v-17M872 672v-27M882 672v-12M897 672v-11M902 672v-12M912 672v-7M921 672v-9M931 672v-9M936 672v-8M961 672v-5M966 672v-12M971 672v-9M976 672v-17M991 672v-33M996 672v-16M1001 672v-15M1011 672v-22M1036 672v-14M1056 672v-10M1066 672v-6M1076 672v-7M1086 672v-8M1091 672v-26M1101 672v-11M1106 672v-9M1111 672v-4M1116 672v-11M1126 672v-7M1131 672v-4M1141 672v-7M1161 672v-5M1166 672v-7M1176 672v-5M1186 672v-7"/>
<path transform="translate(.5 0)" fill="none" stroke="#d0695f" stroke-width="3" d="M13 672v-3M43 672v-3M53 672v-29M58 672v-10M83 672v-6M88 672v-5M93 672v-11M108 672v-6M113 672v-8M118 672v-9M123 672v-16M133 672v-5M148 672v-11M153 672v-22M183 672v-6M188 672v-11M193 672v-10M203 672v-13M213 672v-3M218 672v-7M223 672v-10M228 672v-10M233 672v-5M238 672v-11M248 672v-3M268 672v-5M273 672v-9M278 672v-15M293 672v-11M298 672v-5M308 672v-8M323 672v-3M328 672v-3M358 672v-10M363 672v-9M368 672v-6M373 672v-7M378 672v-7M393 672v-11M403 672v-9M408 672v-8M423 672v-19M428 672v-15M433 672v-12M453 672v-6M473 672v-3M478 672v-5M483 672v-7M503 672v-5M518 672v-7M543 672v-5M548 672v-5M563 672v-4M568 672v-4M588 672v-6M593 672v-6M608 672v-10M613 672v-10M618 672v-12M623 672v-9M638 672v-6M643 672v-3M648 672v-4M653 672v-6M663 672v-8M673 672v-4M678 672v-45M683 672v-14M688 672v-22M697 672v-8M702 672v-10M707 672v-8M712 672v-13M722 672v-11M742 672v-9M752 672v-11M767 672v-7M772 672v-7M782 672v-7M787 672v-9M797 672v-8M807 672v-5M812 672v-7M822 672v-31M832 672v-17M842 672v-11M847 672v-22M857 672v-10M862 672v-10M877 672v-9M887 672v-9M892 672v-10M907 672v-8M916 672v-9M926 672v-8M941 672v-7M946 672v-8M951 672v-11M956 672v-8M981 672v-8M986 672v-11M1006 672v-9M1016 672v-14M1021 672v-12M1026 672v-7M1031 672v-8M1041 672v-21M1046 672v-16M1051 672v-12M1061 672v-9M1071 672v-11M1081 672v-5M1096 672v-22M1121 672v-9M1136 672v-6M1146 672v-7M1151 672v-7M1156 672v-15M1171 672v-3M1181 672v-6"/>
<rect x="5" y="621" width="100" height="16" fill="url(#hd)"/><path d="M105.500 621v16M5 637.500h100" stroke="#8ea6b4"/>
<text x="8" y="634" font-size="12" fill="#1c1c1c" textLength="41" lengthAdjust="spacingAndGlyphs">Volumen</text>
<path d="M55 634l6-7a4 4 0 0 1 5-5l-3 3 2 2 3-2a4 4 0 0 1-5 5l-6 6z" fill="#fff" stroke="#111"/>
<rect x="72" y="623" width="11" height="11" fill="#fff" stroke="#111"/><rect x="72" y="623" width="11" height="3" fill="#111"/>
<circle cx="94.500" cy="629" r="6.500" fill="#333"/><path d="M92 626.500l5 5M97 626.500l-5 5" stroke="#fff" stroke-width="1.800"/>
<text x="1321" y="635" font-size="12" fill="#1f1f1f">4.000k</text>
<text x="1321" y="656" font-size="12" fill="#1f1f1f">2.000k</text>
<rect x="1320" y="657" width="41" height="15" fill="#ffffd8"/><text x="1321" y="669" font-size="12" fill="#6cd06c" textLength="39" lengthAdjust="spacingAndGlyphs">648.755</text>
<path d="M1315 630h3M1315 651h3M1315 664h3" stroke="#444"/>

<!-- time axis -->
<path d="M33 672v4M78 672v4M113 672v4M149 672v4M183 672v4M218 672v4M258 672v4M288 672v4M322 672v4M362 672v4M393 672v4M428 672v4M472 672v4M497 672v4M533 672v4M577 672v4M602 672v4M637 672v4M682 672v4M707 672v4M742 672v4M787 672v4M812 672v4M847 672v4M882 672v4M902 672v4M951 672v4M991 672v4M1021 672v4M1056 672v4M1101 672v4M1126 672v4M1161 672v4M1211 672v4M1231 672v4M1266 672v4M1300 672v4" stroke="#555"/>
<g font-size="12.500" fill="#1c1c1c" text-anchor="middle">
<text x="33" y="690" font-weight="bold">ago</text><text x="78" y="690">12</text><text x="113" y="690">23</text><text x="149" y="690" font-weight="bold">sep</text><text x="183" y="690">12</text><text x="218" y="690">21</text><text x="258" y="690" font-weight="bold">oct</text><text x="288" y="690">11</text><text x="322" y="690">20</text><text x="362" y="690" font-weight="bold">nov</text><text x="393" y="690">09</text><text x="428" y="690">18</text><text x="472" y="690" font-weight="bold">dic</text><text x="497" y="690">08</text><text x="533" y="690">19</text><text x="577" y="690" font-weight="bold">2017</text><text x="602" y="690">09</text><text x="637" y="690">18</text><text x="687" y="690" font-weight="bold">feb</text><text x="707" y="690">07</text><text x="742" y="690">16</text><text x="787" y="690" font-weight="bold">mar</text><text x="812" y="690">08</text><text x="847" y="690">17</text><text x="881" y="690">28</text><text x="902" y="690" font-weight="bold">abr</text><text x="951" y="690">19</text><text x="991" y="690" font-weight="bold">may</text><text x="1021" y="690">10</text><text x="1056" y="690">19</text><text x="1101" y="690" font-weight="bold">jun</text><text x="1126" y="690">08</text><text x="1161" y="690">19</text><text x="1211" y="690" font-weight="bold">jul</text><text x="1231" y="690">07</text><text x="1266" y="690">18</text><text x="1300" y="690">27</text>
</g>
</svg>
</body></html>
